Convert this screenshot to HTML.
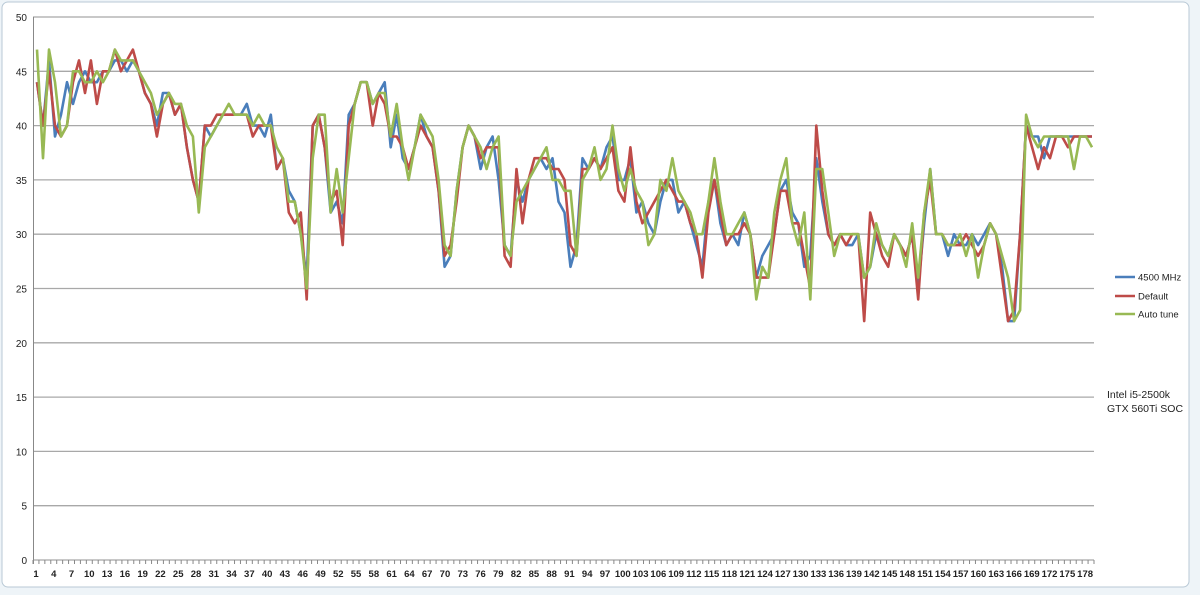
<!DOCTYPE html>
<html><head><meta charset="utf-8"><style>
body{margin:0;width:1200px;height:595px;overflow:hidden;background:#fff;font-family:"Liberation Sans",sans-serif}
</style></head><body>
<svg id="c" width="1200" height="595" xmlns="http://www.w3.org/2000/svg" style="position:absolute;left:0;top:0">
<rect x="0" y="0" width="1200" height="595" fill="#eef4f8"/>
<rect x="2" y="2" width="1187" height="585" rx="6" fill="#fff" stroke="#b9c9d6"/>
<g id="g"></g>
</svg>
<script>
var B=[44,40,46,39,41,44,42,44,45,44,44,45,45,46,46,45,46,45,43,42,40,43,43,41,42,38,35,33,40,39,40,41,41,41,41,42,40,40,39,41,36,37,34,33,30,26,40,41,38,32,33,31,41,42,44,44,42,43,44,38,41,37,36,38,41,39,38,34,27,28,34,38,40,39,36,38,39,35,29,28,35,33,35,36,37,36,37,33,32,27,29,37,36,37,36,38,39,35,35,37,32,33,31,30,33,35,35,32,33,31,29,27,33,35,31,29,30,29,32,30,26,28,29,30,34,35,32,31,27,28,37,33,30,29,30,29,29,30,26,27,30,29,28,30,29,28,30,25,31,36,30,30,28,30,29,29,30,29,30,31,30,27,22,22,30,40,39,39,37,39,39,39,39,39,39,39,39];
var R=[44,40,45,40,39,40,44,46,43,46,42,45,45,47,45,46,47,45,43,42,39,42,43,41,42,38,35,33,40,40,41,41,41,41,41,41,39,40,40,40,36,37,32,31,32,24,40,41,38,33,34,29,40,42,44,44,40,43,42,39,39,38,36,38,40,39,38,34,28,29,33,38,40,39,37,38,38,38,28,27,36,31,35,37,37,37,36,36,35,29,28,36,36,37,36,37,38,34,33,38,33,31,32,33,34,35,34,33,33,31,30,26,32,35,32,29,30,30,31,30,26,26,26,30,34,34,31,31,28,25,40,34,30,29,30,29,30,30,22,32,30,28,27,30,29,28,30,24,32,35,30,30,29,29,29,30,29,28,29,31,30,26,22,23,30,40,38,36,38,37,39,39,38,39,39,39,39];
var G=[47,37,47,44,39,40,45,45,44,44,45,44,45,47,46,46,46,45,44,43,41,42,43,42,42,40,39,32,38,39,40,41,42,41,41,41,40,41,40,40,38,37,33,33,30,25,37,41,41,32,36,32,37,42,44,44,42,43,43,39,42,38,35,38,41,40,39,35,29,28,34,38,40,39,38,36,38,39,29,28,33,34,35,36,37,38,35,35,34,34,28,35,36,38,35,36,40,36,34,36,34,33,29,30,35,34,37,34,33,32,30,30,33,37,33,30,30,31,32,30,24,27,26,32,35,37,31,29,32,24,36,36,32,28,30,30,30,30,26,27,31,29,28,30,29,27,31,26,32,36,30,30,29,29,30,28,30,26,29,31,30,28,26,22,23,41,39,38,39,39,39,39,39,36,39,39,38];
var ns="http://www.w3.org/2000/svg",g=document.getElementById('g'),h='';
function Y(v){return 560-v*10.86}
for(var k=0;k<=10;k++){var y=Y(k*5);h+='<line x1="33" x2="1094" y1="'+y+'" y2="'+y+'" stroke="#a8a8a8" stroke-width="1.3"/>';
h+='<text x="27" y="'+(y+4)+'" font-size="10" text-anchor="end" fill="#222">'+(k*5)+'</text>';}
h+='<line x1="33.5" x2="33.5" y1="17" y2="564" stroke="#888"/>';
var sp=(1094-33)/179;
for(var i=0;i<=179;i++){var x=33+sp*i;h+='<line x1="'+x+'" x2="'+x+'" y1="560" y2="564" stroke="#888"/>';}
for(var n=1;n<=178;n+=3){h+='<text x="'+(33+sp*(n-0.5))+'" y="577" font-size="9.5" font-weight="bold" text-anchor="middle" fill="#222">'+n+'</text>';}
var step=(1092-37)/176;
function P(a,c){var d='';for(var i=0;i<a.length;i++){d+=(i?'L':'M')+(37+i*step).toFixed(1)+','+Y(a[i]).toFixed(1);}return '<path d="'+d+'" fill="none" stroke="'+c+'" stroke-width="2.6" stroke-linejoin="round"/>';}
h+=P(B,'#4a7ebb')+P(R,'#be4b48')+P(G,'#98b954');
var L=[['4500 MHz','#4a7ebb',277],['Default','#be4b48',296],['Auto tune','#98b954',314]];
L.forEach(function(l){h+='<line x1="1115" x2="1135" y1="'+l[2]+'" y2="'+l[2]+'" stroke="'+l[1]+'" stroke-width="2.6"/><text x="1138" y="'+(l[2]+3.5)+'" font-size="9.5" fill="#222">'+l[0]+'</text>';});
h+='<text x="1107" y="398" font-size="10.5" fill="#222">Intel i5-2500k</text><text x="1107" y="412" font-size="10.5" fill="#222">GTX 560Ti SOC</text>';
g.innerHTML=h;
</script>
</body></html>
